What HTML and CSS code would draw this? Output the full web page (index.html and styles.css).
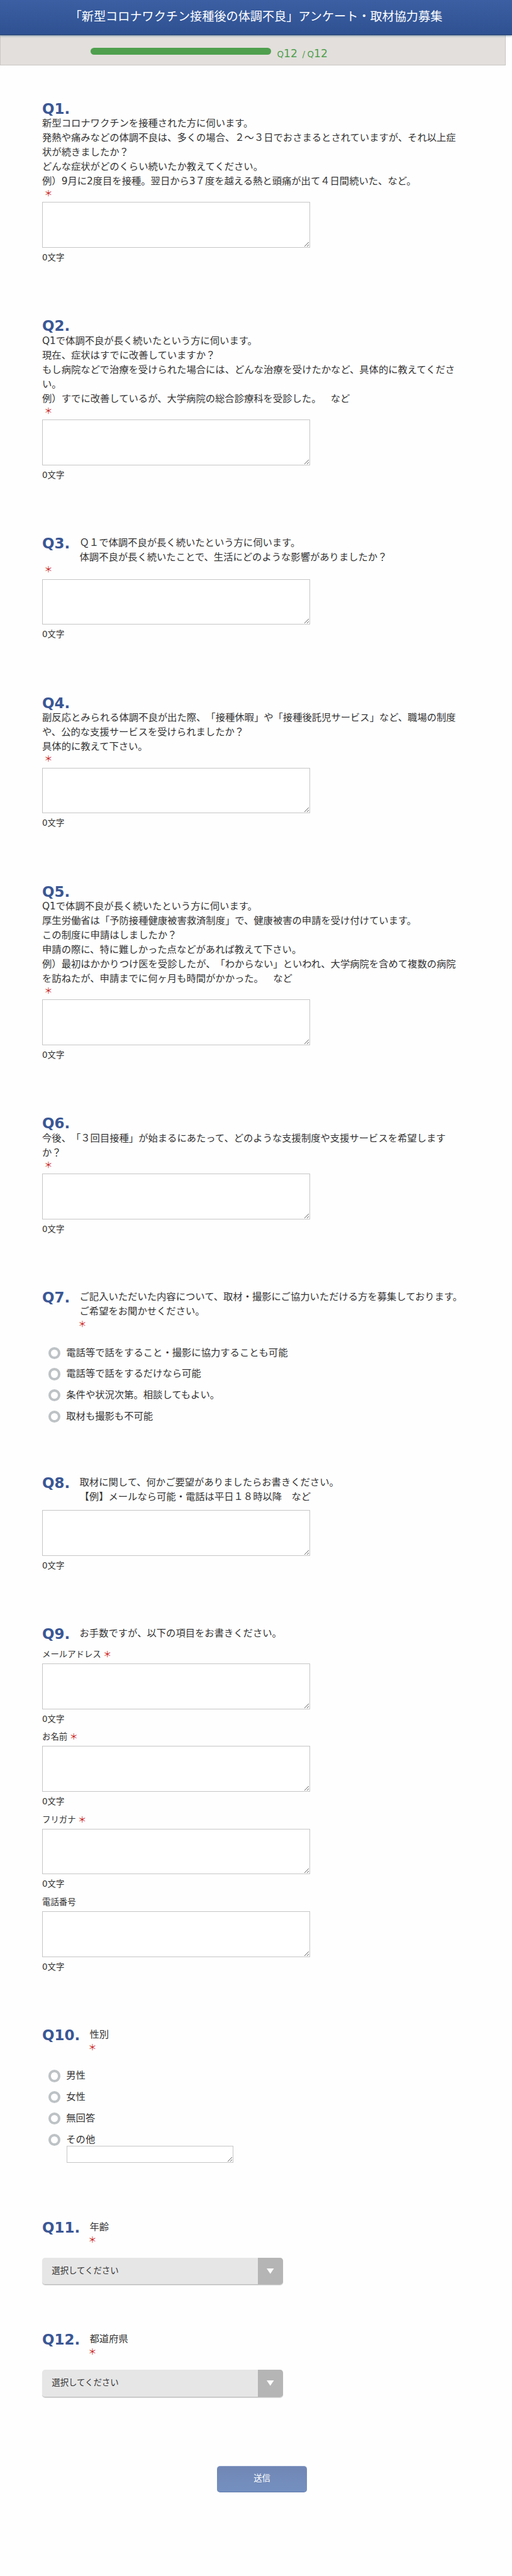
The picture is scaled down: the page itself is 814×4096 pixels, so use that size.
FILE: index.html
```html
<!DOCTYPE html>
<html lang="ja">
<head>
<meta charset="utf-8">
<title>「新型コロナワクチン接種後の体調不良」アンケート・取材協力募集</title>
<link rel="stylesheet" href="styles.css">
</head>
<body>
<header class="header"><h1 class="title">「新型コロナワクチン接種後の体調不良」アンケート・取材協力募集</h1></header>
<div class="progress">
  <div class="progress-bar"></div>
  <p class="progress-text"><small>Q</small>12<small class="total">/ Q</small>12</p>
</div>
<main class="form">
  <section class="question">
    <h2 class="number">Q1.</h2>
    <p class="text">新型コロナワクチンを接種された方に伺います。<br>発熱や痛みなどの体調不良は、多くの場合、２～３日でおさまるとされていますが、それ以上症<br>状が続きましたか？<br>どんな症状がどのくらい続いたか教えてください。<br>例）9月に2度目を接種。翌日から3７度を越える熱と頭痛が出て４日間続いた、など。</p>
    <div class="required">＊</div>
    <textarea class="area"></textarea>
    <p class="count">0文字</p>
  </section>
  <section class="question">
    <h2 class="number">Q2.</h2>
    <p class="text">Q1で体調不良が長く続いたという方に伺います。<br>現在、症状はすでに改善していますか？<br>もし病院などで治療を受けられた場合には、どんな治療を受けたかなど、具体的に教えてくださ<br>い。<br>例）すでに改善しているが、大学病院の総合診療科を受診した。　など</p>
    <div class="required">＊</div>
    <textarea class="area"></textarea>
    <p class="count">0文字</p>
  </section>
  <section class="question">
    <div class="row">
      <h2 class="number">Q3.</h2>
      <p class="text">Ｑ１で体調不良が長く続いたという方に伺います。<br>体調不良が長く続いたことで、生活にどのような影響がありましたか？</p>
    </div>
    <div class="required">＊</div>
    <textarea class="area"></textarea>
    <p class="count">0文字</p>
  </section>
  <section class="question">
    <h2 class="number">Q4.</h2>
    <p class="text">副反応とみられる体調不良が出た際、「接種休暇」や「接種後託児サービス」など、職場の制度<br>や、公的な支援サービスを受けられましたか？<br>具体的に教えて下さい。</p>
    <div class="required">＊</div>
    <textarea class="area"></textarea>
    <p class="count">0文字</p>
  </section>
  <section class="question">
    <h2 class="number">Q5.</h2>
    <p class="text">Q1で体調不良が長く続いたという方に伺います。<br>厚生労働省は「予防接種健康被害救済制度」で、健康被害の申請を受け付けています。<br>この制度に申請はしましたか？<br>申請の際に、特に難しかった点などがあれば教えて下さい。<br>例）最初はかかりつけ医を受診したが、「わからない」といわれ、大学病院を含めて複数の病院<br>を訪ねたが、申請までに何ヶ月も時間がかかった。　など</p>
    <div class="required">＊</div>
    <textarea class="area"></textarea>
    <p class="count">0文字</p>
  </section>
  <section class="question">
    <h2 class="number">Q6.</h2>
    <p class="text">今後、「３回目接種」が始まるにあたって、どのような支援制度や支援サービスを希望します<br>か？</p>
    <div class="required">＊</div>
    <textarea class="area"></textarea>
    <p class="count">0文字</p>
  </section>
  <section class="question choice">
    <div class="row">
      <h2 class="number">Q7.</h2>
      <div>
        <p class="text">ご記入いただいた内容について、取材・撮影にご協力いただける方を募集しております。<br>ご希望をお聞かせください。</p>
        <div class="required">＊</div>
      </div>
    </div>
    <div class="options">
      <label class="option"><input type="radio" name="q7" class="radio">電話等で話をすること・撮影に協力することも可能</label>
      <label class="option"><input type="radio" name="q7" class="radio">電話等で話をするだけなら可能</label>
      <label class="option"><input type="radio" name="q7" class="radio">条件や状況次第。相談してもよい。</label>
      <label class="option"><input type="radio" name="q7" class="radio">取材も撮影も不可能</label>
    </div>
  </section>
  <section class="question optional">
    <div class="row">
      <h2 class="number">Q8.</h2>
      <p class="text">取材に関して、何かご要望がありましたらお書きください。<br>【例】メールなら可能・電話は平日１８時以降　など</p>
    </div>
    <textarea class="area"></textarea>
    <p class="count">0文字</p>
  </section>
  <section class="question fields">
    <div class="row">
      <h2 class="number">Q9.</h2>
      <p class="text">お手数ですが、以下の項目をお書きください。</p>
    </div>
    <p class="label">メールアドレス<span class="mark">＊</span></p>
    <textarea class="area"></textarea>
    <p class="count">0文字</p>
    <p class="label">お名前<span class="mark">＊</span></p>
    <textarea class="area"></textarea>
    <p class="count">0文字</p>
    <p class="label">フリガナ<span class="mark">＊</span></p>
    <textarea class="area"></textarea>
    <p class="count">0文字</p>
    <p class="label">電話番号</p>
    <textarea class="area"></textarea>
    <p class="count">0文字</p>
  </section>
  <section class="question choice with-other">
    <div class="row">
      <h2 class="number">Q10.</h2>
      <div><p class="text">性別</p><div class="required">＊</div></div>
    </div>
    <div class="options">
      <label class="option"><input type="radio" name="q10" class="radio">男性</label>
      <label class="option"><input type="radio" name="q10" class="radio">女性</label>
      <label class="option"><input type="radio" name="q10" class="radio">無回答</label>
      <label class="option"><input type="radio" name="q10" class="radio">その他</label>
    </div>
    <textarea class="area other"></textarea>
  </section>
  <section class="question choice dropdown">
    <div class="row">
      <h2 class="number">Q11.</h2>
      <div><p class="text">年齢</p><div class="required">＊</div></div>
    </div>
    <div class="select"><span class="value">選択してください</span><span class="toggle"><svg class="arrow" viewBox="0 0 12 9"><path d="M0 0h12L6 9z" fill="#fff"/></svg></span></div>
  </section>
  <section class="question choice dropdown">
    <div class="row">
      <h2 class="number">Q12.</h2>
      <div><p class="text">都道府県</p><div class="required">＊</div></div>
    </div>
    <div class="select"><span class="value">選択してください</span><span class="toggle"><svg class="arrow" viewBox="0 0 12 9"><path d="M0 0h12L6 9z" fill="#fff"/></svg></span></div>
  </section>
  <button class="submit" type="button">送信</button>
</main>
</body>
</html>
```
FILE: styles.css
```css
* { box-sizing: border-box; margin: 0; padding: 0; }
html { font-size: 9.5755px; background: #fefefe; }
body {
  font-family: "DejaVu Sans", "Noto Sans CJK JP", sans-serif;
  font-size: 1.6rem;
  line-height: 2.4rem;
  text-spacing-trim: space-all;
  color: #333;
  height: 427.8rem;
  overflow: hidden;
}
.header {
  position: relative;
  height: 5.9rem;
  padding-top: 1.3rem;
  background: linear-gradient(#3b5fa2, #2f5192);
  border-bottom: 1px solid #26416f;
  box-shadow: 0 1px 3px rgba(40, 90, 130, .6);
}
.title { font-size: 2rem; font-weight: 400; line-height: 3.2rem; color: #fff; text-align: center; white-space: nowrap; }
.progress {
  display: flex;
  width: 84rem;
  height: 5rem;
  padding: 2rem 0 0 14.9rem;
  background: #e3dfdc;
  border: 1px solid #c9c6c4;
  border-top: 0;
}
.progress-bar { width: 30rem; height: 1.2rem; border-radius: .6rem; background: #4f9f4e; }
.progress-text { margin: -.3rem 0 0 1rem; font-size: 1.8rem; line-height: 2.6rem; color: #4f9f4e; white-space: nowrap; }
.progress-text small { font-size: 1.4rem; }
.total { margin-left: .8rem; word-spacing: -.1rem; }
.form { padding: 5.87rem 0 0 7rem; }
.question { margin-bottom: 8.32rem; }
.row { display: flex; gap: 1.6rem; }
.number { font-size: 2.4rem; line-height: 2.55rem; height: 2.55rem; font-weight: 700; color: #3a5795; white-space: nowrap; }
.text { white-space: nowrap; }
.required { height: 2.25rem; padding-left: .35rem; font-size: 1.4rem; line-height: 1.7rem; color: #c22; }
.row + .required { height: 2.35rem; }
.row .required { padding-left: 0; margin-left: -.25rem; line-height: 1.95rem; }
.area { display: block; width: 44.5rem; height: 7.6rem; border: 1px solid #c6c6c6; background: #fff; resize: both; outline: 0; }
.count { font-size: 1.4rem; line-height: 3.4rem; }
.choice .required { height: 3.87rem; }
.options { display: flex; flex-direction: column; padding-left: 1rem; }
.option { display: flex; align-items: center; gap: 1rem; height: 3.525rem; }
.radio { appearance: none; width: 2rem; height: 2rem; border: 4px solid #bdc2c5; border-radius: 50%; background: #fff; }
.choice { margin-bottom: 8rem; }
.optional .area { margin-top: .95rem; }
.fields .row { margin-bottom: .9rem; }
.label { font-size: 1.4rem; line-height: 2.5rem; height: 2.72rem; }
.mark { margin-left: .35rem; color: #c22; }
.other { width: 27.6rem; height: 2.8rem; margin: -.7rem 0 0 4.1rem; }
.with-other { margin-bottom: 9.5rem; }
.dropdown { margin-bottom: 7.85rem; }
.select { display: flex; width: 40rem; height: 4.5rem; border-radius: .5rem; overflow: hidden; background: #e6e6e6; border-bottom: 1px solid #bbb; font-size: 1.4rem; line-height: 4.4rem; box-shadow: 0 1px 1px #ddd; }
.value { flex: 1; padding-left: 1.6rem; }
.toggle { display: flex; align-items: center; justify-content: center; width: 4.2rem; background: #b5b5b5; }
.arrow { width: 1.2rem; height: .9rem; }
.submit { display: block; width: 15rem; height: 4.4rem; margin: 11.4rem 0 0 29rem; border: 0; border-top: 1px solid #8aa0c8; border-bottom: 1px solid #5f7aab; border-radius: .5rem; background: linear-gradient(#7187b5, #7490c0); color: #fff; font: inherit; font-size: 1.4rem; }
```
